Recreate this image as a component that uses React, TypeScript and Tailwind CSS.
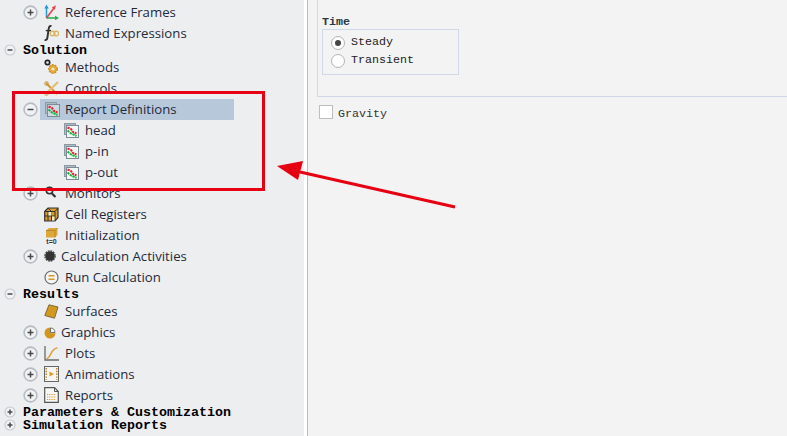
const treeFont = { fontFamily: '"Open Sans", "Noto Sans", sans-serif' };

function Expander({ open, small }: { open?: boolean; small?: boolean }) {
  const s = small ? 12 : 15;
  const r = small ? 5 : 6.4;
  const c = s / 2;
  const a = small ? 2.5 : 3;
  return (
    <svg width={s} height={s} viewBox={`0 0 ${s} ${s}`} className="shrink-0">
      <circle cx={c} cy={c} r={r} fill="#f1f2f4" stroke={small ? "#c4c9ce" : "#b5bcc3"} strokeWidth={small ? 1.1 : 1.6} />
      <path d={`M${c - a} ${c}H${c + a}`} stroke="#4a4a4a" strokeWidth="1.5" />
      {!open && <path d={`M${c} ${c - a}V${c + a}`} stroke="#4a4a4a" strokeWidth="1.5" />}
    </svg>
  );
}

function ReportIcon({ dark }: { dark?: boolean }) {
  return (
    <svg width="15" height="15" viewBox="0 0 15 15" className="shrink-0">
      <rect x="0.5" y="0.5" width="11" height="11" fill="#aebac4" stroke="#8d99a3" />
      <rect x="2.5" y="2.5" width="12" height="12" fill={dark ? "#cfd9e2" : "#f7f8f8"} stroke="#7d8b96" />
      <path d="M3.5 4.5l3.5 1.5 2 3 3.5 1.5" fill="none" stroke="#e8202c" strokeWidth="2" strokeDasharray="2.4 0.7" />
      <path d="M3.5 7.5l3.5 3 5.5 2.5" fill="none" stroke="#12b83c" strokeWidth="2" strokeDasharray="2.4 0.7" />
    </svg>
  );
}

const icons: Record<string, React.ReactNode> = {
  frames: (
    <svg width="15" height="16" viewBox="0 0 15 16">
      <path d="M2.5 14V3" stroke="#1f9bd1" strokeWidth="1.5" />
      <path d="M0.3 4.5l2.2-4 2.2 4z" fill="#1f9bd1" />
      <path d="M2.5 14H12" stroke="#2aa84a" strokeWidth="1.5" />
      <path d="M11 11.8l4 2.2-4 2.2z" fill="#2aa84a" />
      <path d="M2.5 14L10 4" stroke="#e0454a" strokeWidth="1.5" />
      <path d="M7.8 3.5l4-2.2-.8 4.5z" fill="#e0454a" />
    </svg>
  ),
  fx: (
    <svg width="15" height="16" viewBox="0 0 15 16">
      <path d="M7.5 1.2C5.5 0.6 4.9 2 4.6 4.5L3.4 12.5C3.1 14.6 2.2 15.3 0.6 15" fill="none" stroke="#333" strokeWidth="1.9" />
      <path d="M1.8 5.6H7" stroke="#333" strokeWidth="1.4" />
      <circle cx="8.6" cy="8.5" r="2.4" fill="none" stroke="#d9b25c" strokeWidth="1.2" />
      <circle cx="12.2" cy="8.5" r="2.4" fill="none" stroke="#d9b25c" strokeWidth="1.2" />
    </svg>
  ),
  methods: (
    <svg width="15" height="16" viewBox="0 0 15 16">
      <circle cx="3.5" cy="3.5" r="2.2" fill="none" stroke="#222" strokeWidth="1.7" />
      <circle cx="9" cy="10" r="4.2" fill="#e3ab3f" stroke="#c9902a" strokeWidth="1.4" strokeDasharray="2 1" />
      <circle cx="9" cy="10" r="1.6" fill="#f6e3b4" />
    </svg>
  ),
  controls: (
    <svg width="15" height="15" viewBox="0 0 15 15">
      <path d="M2 2l11 11" stroke="#c9973a" strokeWidth="2" />
      <path d="M14 1L2 12.5" stroke="#e3bd78" strokeWidth="2.2" />
      <circle cx="2.5" cy="2.5" r="1.8" fill="none" stroke="#c9973a" />
      <circle cx="2.5" cy="12.5" r="1.8" fill="none" stroke="#c9973a" />
    </svg>
  ),
  monitors: (
    <svg width="14" height="14" viewBox="0 0 14 14">
      <circle cx="5.5" cy="4.5" r="3.2" fill="#f2f2f2" stroke="#333" strokeWidth="1.6" />
      <path d="M8 7.5l3.5 3.5" stroke="#333" strokeWidth="2.2" />
    </svg>
  ),
  cells: (
    <svg width="15" height="15" viewBox="0 0 15 15">
      <path d="M0.7 4.5L4 1H14V10.5L11 14H0.7z" fill="#d79e2e" stroke="#333" strokeWidth="1.2" />
      <path d="M0.7 4.5H11V14M11 4.5L14 1M4 4.5V14M7.5 4.5V14M0.7 9H11M4 1L7.5 4.5" fill="none" stroke="#333" strokeWidth="1" />
      <rect x="4.5" y="5" width="3" height="3.5" fill="#f4ead0" />
      <rect x="8" y="9.5" width="2.5" height="4" fill="#f4ead0" />
    </svg>
  ),
  init: (
    <svg width="15" height="17" viewBox="0 0 15 17">
      <path d="M2 3.5L5 1H13.5V8L11 10.5H2z" fill="#dca83a" />
      <path d="M2 3.5H11V10.5M11 3.5L13.5 1" fill="none" stroke="#b8862a" />
      <text x="7.5" y="16.5" textAnchor="middle" fontSize="7" fontWeight="700" fill="#333" fontFamily="Liberation Sans, sans-serif">t=0</text>
    </svg>
  ),
  gear: (
    <svg width="12" height="12" viewBox="0 0 12 12">
      <circle cx="6" cy="6" r="4.8" fill="#333" />
      <circle cx="6" cy="6" r="5.2" fill="none" stroke="#333" strokeWidth="1.1" strokeDasharray="1.8 0.9" />
    </svg>
  ),
  run: (
    <svg width="15" height="15" viewBox="0 0 15 15">
      <circle cx="7.5" cy="7.5" r="6.5" fill="#f4f4f2" stroke="#6e6e6e" strokeWidth="1.2" />
      <path d="M4.5 5.8h6M4.5 9.2h6" stroke="#d8962a" strokeWidth="1.6" />
    </svg>
  ),
  surfaces: (
    <svg width="15" height="15" viewBox="0 0 15 15">
      <path d="M5 0.8L14 3 10.5 14.2 0.8 11.5z" fill="#d2981f" stroke="#7d6a3e" strokeWidth="1" strokeLinejoin="round" />
    </svg>
  ),
  graphics: (
    <svg width="13" height="13" viewBox="0 0 13 13">
      <circle cx="6" cy="7" r="5.5" fill="#d2961f" />
      <path d="M6.5 1.2h6v6h-6z" fill="#eceef0" />
      <path d="M6.5 2A4.7 4.7 0 0 1 11 6.5H6.5z" fill="#f4f4f4" stroke="#555" strokeWidth="0.8" />
    </svg>
  ),
  plots: (
    <svg width="15" height="16" viewBox="0 0 15 16">
      <path d="M1 1V15H15" fill="none" stroke="#6b6b6b" strokeWidth="1.3" />
      <path d="M2.5 13.5C7 13.5 6.5 3 13.5 3" fill="none" stroke="#d8a23c" strokeWidth="1.5" />
    </svg>
  ),
  anim: (
    <svg width="15" height="16" viewBox="0 0 15 16">
      <rect x="0.5" y="0.5" width="14" height="15" fill="#f5f5f3" stroke="#666" />
      <path d="M2.2 2v12M12.8 2v12" stroke="#b57d1e" strokeWidth="1.4" strokeDasharray="1.4 1.4" />
      <path d="M5.5 5.5l4.5 2.5-4.5 2.5z" fill="#dd9d25" />
    </svg>
  ),
  reports: (
    <svg width="15" height="16" viewBox="0 0 15 16">
      <path d="M0.7 0.7H10.5L14.3 4.5V15.3H0.7z" fill="#f7f7f5" stroke="#555" strokeWidth="1.2" />
      <path d="M10.5 0.7V4.5H14.3" fill="none" stroke="#555" />
      <path d="M3 7.5h9M3 10h9M3 12.5h9" stroke="#d8992a" strokeWidth="1.1" strokeDasharray="1.2 1" />
    </svg>
  ),
};

function Label({ children }: { children: string }) {
  return <span className="whitespace-nowrap pt-[2px] text-[13.2px] text-[#1f2a3c]" style={treeFont}>{children}</span>;
}

function Row({ label, icon, expander, tight }: { label: string; icon: React.ReactNode; expander?: boolean; tight?: boolean }) {
  return (
    <div className="flex h-[21px] items-center">
      <div className="flex w-[44px] shrink-0 justify-end pr-[6px]">{expander && <Expander />}</div>
      <div className={`flex shrink-0 items-center ${tight ? "w-[17px]" : "w-[21px]"}`}>{icon}</div>
      <Label>{label}</Label>
    </div>
  );
}

function ChildRow({ label }: { label: string }) {
  return (
    <div className="flex h-[21px] items-center pl-[64px]">
      <div className="w-[21px] shrink-0"><ReportIcon /></div>
      <Label>{label}</Label>
    </div>
  );
}

function Section({ label, open }: { label: string; open?: boolean }) {
  return (
    <div className="flex h-[13px] items-center pl-[4px]">
      <div className="w-[19px] shrink-0"><Expander small open={open} /></div>
      <span className="whitespace-nowrap pt-[1px] font-['Liberation_Mono',monospace] text-[13.33px] font-bold leading-[12px] text-black">{label}</span>
    </div>
  );
}

function Radio({ label, checked }: { label: string; checked?: boolean }) {
  return (
    <div className="flex h-[18px] items-center gap-[6px]">
      <span className="flex h-[14px] w-[14px] items-center justify-center rounded-full border border-[#b4b4b4] bg-white">
        {checked && <span className="h-[6px] w-[6px] rounded-full bg-[#444]" />}
      </span>
      <span className="font-['Liberation_Mono',monospace] text-[11.67px] text-[#222]">{label}</span>
    </div>
  );
}

export default function App() {
  return (
    <div className="relative flex h-[436px] w-[787px] overflow-hidden bg-[#f3f3f3]">
      <aside className="h-full w-[304px] shrink-0 bg-[#eceef0] pt-[1.5px]">
        <Row label="Reference Frames" icon={icons.frames} expander />
        <Row label="Named Expressions" icon={icons.fx} />
        <Section label="Solution" open />
        <Row label="Methods" icon={icons.methods} />
        <Row label="Controls" icon={icons.controls} />
        <div className="flex h-[21px] items-center">
          <div className="flex w-[40px] shrink-0 justify-end pr-[2px]"><Expander open /></div>
          <div className="flex h-full w-[194px] items-center bg-[#b8c8db]">
            <div className="w-[25px] shrink-0 pl-[5px]"><ReportIcon dark /></div>
            <Label>Report Definitions</Label>
          </div>
        </div>
        <ChildRow label="head" />
        <ChildRow label="p-in" />
        <ChildRow label="p-out" />
        <Row label="Monitors" icon={icons.monitors} expander />
        <Row label="Cell Registers" icon={icons.cells} />
        <Row label="Initialization" icon={icons.init} />
        <Row label="Calculation Activities" icon={icons.gear} expander tight />
        <Row label="Run Calculation" icon={icons.run} />
        <Section label="Results" open />
        <Row label="Surfaces" icon={icons.surfaces} />
        <Row label="Graphics" icon={icons.graphics} expander tight />
        <Row label="Plots" icon={icons.plots} expander />
        <Row label="Animations" icon={icons.anim} expander />
        <Row label="Reports" icon={icons.reports} expander />
        <Section label="Parameters & Customization" />
        <Section label="Simulation Reports" />
      </aside>
      <div className="w-[3px] shrink-0 bg-white" />
      <main className="h-full flex-1 border-l border-[#bcbcbc] bg-[#f3f3f3] pl-[9px]">
        <div className="h-[97px] border-b border-l border-[#d0d7e6] pl-[4px] pt-[15px]">
          <div className="h-[14px] font-['Liberation_Mono',monospace] text-[11.67px] font-bold leading-[14px] text-[#2b3644]">Time</div>
          <div className="h-[46px] w-[137px] border border-[#d0d7e6] pl-[8px] pt-[4px]">
            <Radio label="Steady" checked />
            <Radio label="Transient" />
          </div>
        </div>
        <div className="ml-[2px] mt-[8px] flex h-[14px] items-center gap-[5px]">
          <span className="h-[14px] w-[14px] border border-[#bdbdbd] bg-white" />
          <span className="pt-[5px] font-['Liberation_Mono',monospace] text-[11.67px] text-[#333]">Gravity</span>
        </div>
      </main>

      <div className="pointer-events-none absolute left-[12px] top-[91px] h-[100px] w-[253px] border-[3px] border-[#e60012]" />
      <svg className="pointer-events-none absolute left-0 top-0" width="787" height="436" viewBox="0 0 787 436">
        <path d="M300 172L455 207" stroke="#e60012" strokeWidth="3" />
        <path d="M277 166L303 161L298 180z" fill="#e60012" />
      </svg>
    </div>
  );
}
